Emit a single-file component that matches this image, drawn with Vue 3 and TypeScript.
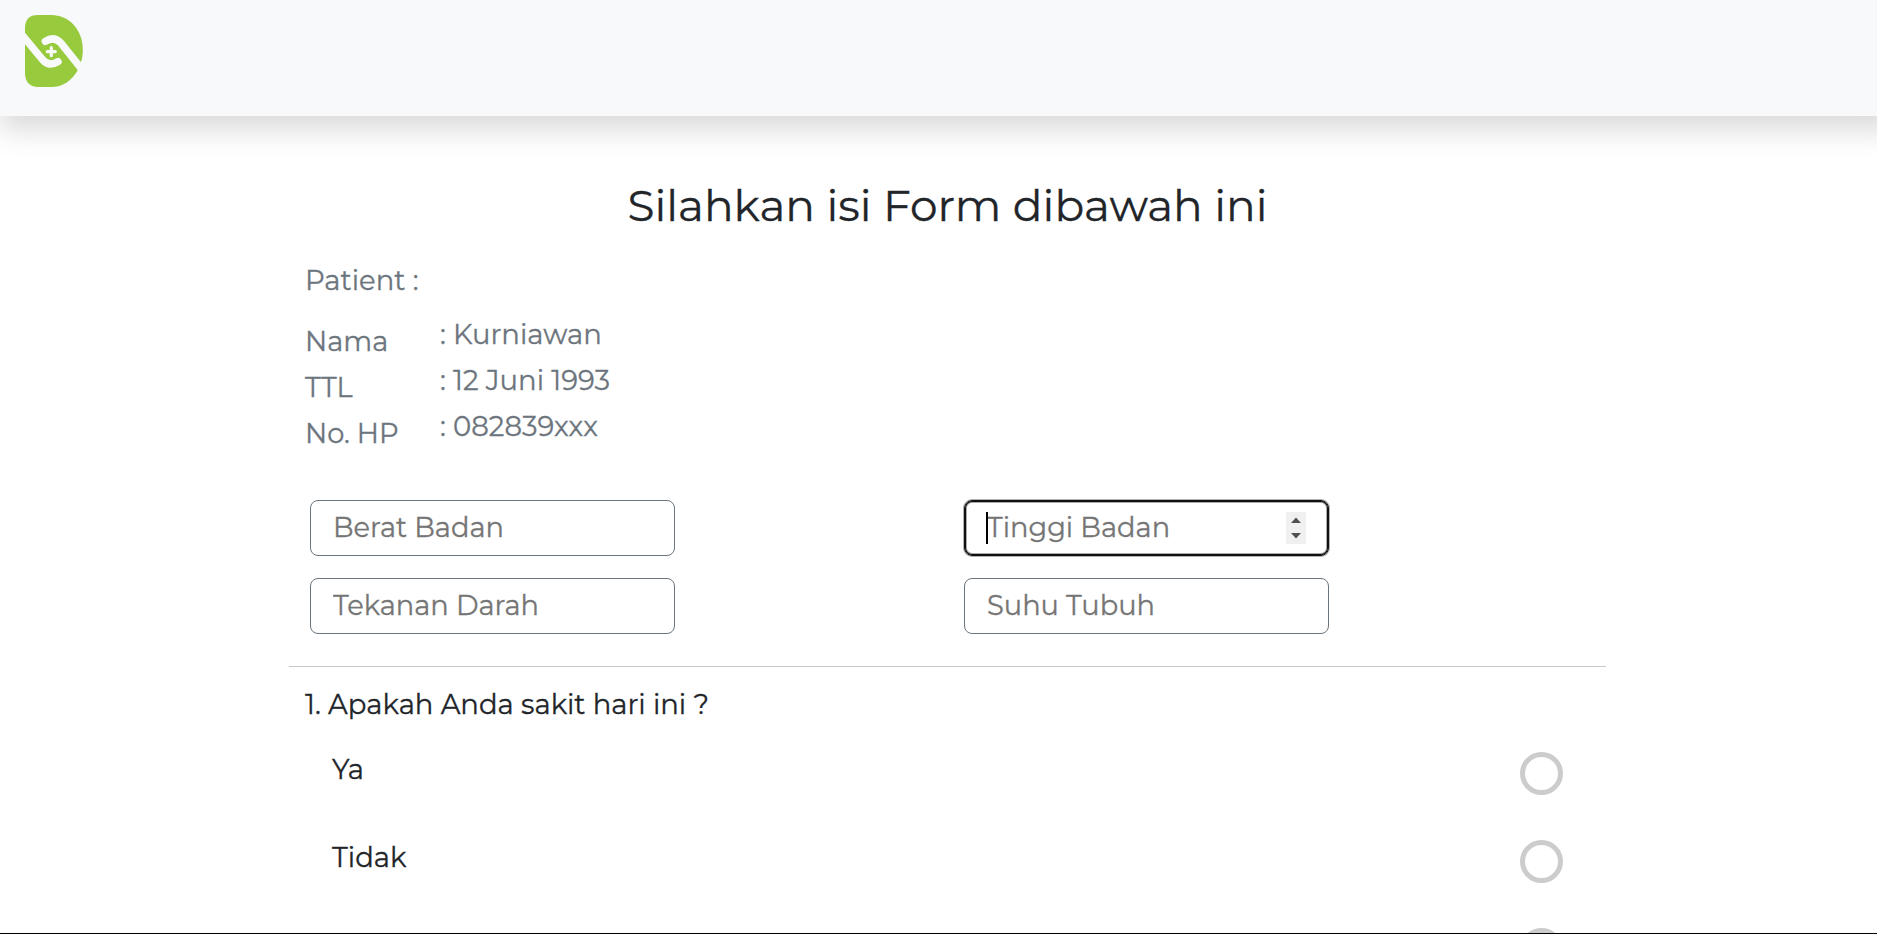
<script setup lang="ts">
interface Detail { label: string; value: string }
interface Measure { name: string; placeholder: string; active?: boolean }

const details: Detail[] = [
  { label: 'Nama', value: 'Kurniawan' },
  { label: 'TTL', value: '12 Juni 1993' },
  { label: 'No. HP', value: '082839xxx' },
]

const measures: Measure[] = [
  { name: 'berat', placeholder: 'Berat Badan' },
  { name: 'tinggi', placeholder: 'Tinggi Badan', active: true },
  { name: 'tekanan', placeholder: 'Tekanan Darah' },
  { name: 'suhu', placeholder: 'Suhu Tubuh' },
]

const options: string[] = ['Ya', 'Tidak', '']
</script>

<template>
  <div class="page">
    <header class="navbar">
      <svg class="logo" viewBox="0 0 58 72" aria-hidden="true">
        <path class="logo-body" d="M0 13C0 4.500 4.500 0 13 0H26C44.500 0 57.800 15 57.800 35C57.800 39.500 57.200 43.500 56 47L52.500 55.500C46.500 66 37.500 72 26.500 72H13C4.500 72 0 66.500 0 58Z" />
        <path class="logo-band" d="M-6 16.300L17.300 44.300C21.500 49.800 27 50.600 33 46.700" />
        <path class="logo-band" d="M20.300 26.300C26.500 22.300 31.500 23 36 28.200L60 58.300" />
        <path class="logo-plus" d="M26.300 32.700V40.700M22.300 36.700H30.300" />
      </svg>
    </header>

    <main class="form">
      <h1 class="title">Silahkan isi Form dibawah ini</h1>

      <section class="patient">
        <p class="line">Patient :</p>
        <div class="details">
          <div class="labels">
            <p v-for="d in details" :key="d.label" class="line">{{ d.label }}</p>
          </div>
          <div class="values">
            <p v-for="d in details" :key="d.value" class="line">: {{ d.value }}</p>
          </div>
        </div>
      </section>

      <section class="measures">
        <div v-for="m in measures" :key="m.name" class="field" :class="{ active: m.active }">
          <input class="input" type="text" :name="m.name" :placeholder="m.placeholder" />
          <template v-if="m.active">
            <span class="caret"></span>
            <svg class="spinner" viewBox="0 0 20 32" aria-hidden="true">
              <path d="M5 11L10 5.500L15 11ZM5 21L10 26.500L15 21Z" />
            </svg>
          </template>
        </div>
      </section>

      <hr class="divider" />

      <section class="question">
        <p class="line">1. Apakah Anda sakit hari ini ?</p>
        <div class="options">
          <label v-for="(o, i) in options" :key="i" class="option">
            <span class="option-text">{{ o }}</span>
            <span class="radio"></span>
          </label>
        </div>
      </section>
    </main>
  </div>
</template>

<style>
html,
body {
  overflow: hidden;
}
</style>

<style scoped>
.page {
  box-sizing: border-box;
  height: 934px;
  overflow: hidden;
  border-bottom: 1px solid #000;
  background: #fff;
  color: #212529;
  font-family: Montserrat, Inter, "Open Sans", sans-serif;
  font-size: 27.5px;
  -webkit-text-stroke: 0.3px currentColor;
}

.navbar {
  box-sizing: border-box;
  width: calc(100% + 18px);
  height: 116px;
  padding: 15px 25px;
  background: #f8f9fb;
  box-shadow: 0 14px 27px rgba(0, 0, 0, 0.15);
}

.logo {
  display: block;
  width: 58px;
  height: 72px;
}

.logo-body {
  fill: #97ca3d;
}

.logo-band,
.logo-plus {
  fill: none;
  stroke: #f8f9fb;
  stroke-linecap: round;
}

.logo-band {
  stroke-width: 7.4;
}

.logo-plus {
  stroke-width: 3.2;
}

.form {
  width: 1317px;
  margin-left: 289px;
  padding-top: 63px;
}

.title {
  margin: 0;
  font-size: 43.9px;
  font-weight: 400;
  line-height: 53px;
  text-align: center;
}

.line {
  margin: 0;
  line-height: 46px;
}

.patient {
  padding: 25px 16px 0;
  color: #6c757d;
}

.details {
  display: flex;
  padding-top: 8px;
}

.labels {
  width: 135px;
  padding-top: 8px;
  font-size: 27.3px;
}

.measures {
  display: grid;
  grid-template-columns: 365px 365px;
  column-gap: 289px;
  row-gap: 22px;
  padding: 43px 21px 0;
}

.field {
  position: relative;
  box-sizing: border-box;
  height: 56px;
  border: 1px solid #6c757d;
  border-radius: 8px;
}

.input {
  display: block;
  box-sizing: border-box;
  width: 100%;
  height: 53px;
  padding: 0 22px;
  border: 0;
  outline: 0;
  background: transparent;
  font: inherit;
  font-size: 27.3px;
}

.input::placeholder {
  color: #757575;
  opacity: 1;
}

.active {
  border-color: #101010;
  box-shadow: inset 0 0 0 1px #101010, inset 0 0 0 2px #aaa, 0 0 0 1px rgba(0, 0, 0, 0.3);
}

.caret {
  position: absolute;
  top: 11px;
  left: 21px;
  width: 2px;
  height: 32px;
  background: #000;
}

.spinner {
  position: absolute;
  top: 11px;
  right: 22px;
  width: 20px;
  height: 32px;
  background: #f0f0f0;
  fill: #505050;
}

.divider {
  height: 1px;
  margin: 32px 0 0;
  border: 0;
  background: #c8c8c8;
}

.question {
  padding: 14px 43px 0 16px;
}

.options {
  display: grid;
  row-gap: 45px;
  padding: 25px 0 0 27px;
}

.option {
  display: flex;
  justify-content: space-between;
  height: 43px;
}

.option-text {
  margin-top: -6px;
  line-height: 46px;
}

.radio {
  box-sizing: border-box;
  width: 43px;
  height: 43px;
  border: 5px solid #ccc;
  border-radius: 50%;
}
</style>
